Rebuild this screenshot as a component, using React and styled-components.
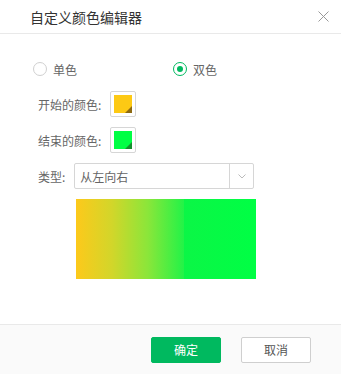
import React, { useState } from "react";
import styled, { createGlobalStyle } from "styled-components";

const GlobalStyle = createGlobalStyle`
  html, body {
    margin: 0;
    padding: 0;
    background: #ffffff;
  }
  body {
    font-family: "Noto Sans CJK SC", "Noto Sans", sans-serif;
  }
`;

const Dialog = styled.div`
  display: flex;
  flex-direction: column;
  width: 341px;
  height: 374px;
  background: #fff;
`;

const Header = styled.div`
  display: flex;
  align-items: center;
  height: 33px;
  padding: 0 8px 0 30px;
  border-bottom: 1px solid #e9e9e9;
`;

const Title = styled.div`
  flex: 1;
  font-size: 14px;
  color: #333;
`;

const CloseBtn = styled.button`
  display: grid;
  place-content: center;
  width: 20px;
  height: 20px;
  padding: 0;
  border: none;
  background: transparent;
  cursor: pointer;
`;

const Body = styled.div`
  flex: 1;
  display: flex;
  flex-direction: column;
  gap: 10px;
  padding: 22px 0 0 38px;
`;

const Row = styled.div`
  display: flex;
  align-items: center;
  gap: 9px;
  height: 26px;
`;

const RadioRow = styled.div`
  display: flex;
  align-items: center;
  height: 26px;
  margin-left: -5px;
  margin-bottom: -1px;
`;

const RadioItem = styled.label`
  display: flex;
  align-items: center;
  gap: 6px;
  width: 140px;
  font-size: 12px;
  color: #666;
  cursor: pointer;
`;

const RadioCircle = styled.span`
  display: grid;
  place-content: center;
  box-sizing: border-box;
  width: 14px;
  height: 14px;
  border-radius: 50%;
  border: 1px solid ${(p) => (p.$checked ? "#00b95f" : "#d0d0d0")};
  &::after {
    content: "";
    display: ${(p) => (p.$checked ? "block" : "none")};
    width: 6px;
    height: 6px;
    border-radius: 50%;
    background: #00b95f;
  }
`;

const Label = styled.span`
  font-size: 12px;
  color: #666;
`;

const Swatch = styled.div`
  position: relative;
  box-sizing: border-box;
  width: 26px;
  height: 26px;
  padding: 3px;
  border: 1px solid #d6d6d6;
  border-radius: 2px;
`;

const SwatchFill = styled.div`
  position: relative;
  width: 100%;
  height: 100%;
  background: ${(p) => p.$color};
  &::after {
    content: "";
    position: absolute;
    right: 0;
    bottom: 0;
    border-style: solid;
    border-width: 0 0 7px 7px;
    border-color: transparent transparent ${(p) => p.$shade} transparent;
  }
`;

const Select = styled.div`
  display: flex;
  box-sizing: border-box;
  width: 180px;
  height: 26px;
  border: 1px solid #d6d6d6;
  border-radius: 2px;
`;

const SelectValue = styled.div`
  flex: 1;
  display: flex;
  align-items: center;
  padding-left: 5px;
  font-size: 12px;
  color: #666;
`;

const SelectArrow = styled.div`
  display: grid;
  place-content: center;
  width: 23px;
  border-left: 1px solid #d6d6d6;
`;

const Preview = styled.div`
  width: 180px;
  height: 80px;
  margin-left: 38px;
  background: linear-gradient(
    to right,
    #fdc91b 0%,
    #d2d62a 20%,
    #8ae63a 40%,
    #22f347 60%,
    #0bf646 60%,
    #00ff44 100%
  );
`;

const Footer = styled.div`
  display: flex;
  align-items: center;
  justify-content: flex-end;
  gap: 20px;
  height: 49px;
  padding-right: 30px;
  background: #fafafa;
  border-top: 1px solid #e9e9e9;
`;

const Button = styled.button`
  box-sizing: border-box;
  width: 70px;
  height: 26px;
  border-radius: 2px;
  font-family: inherit;
  font-size: 12px;
  cursor: pointer;
  border: 1px solid ${(p) => (p.$primary ? "#00b95f" : "#cfcfcf")};
  background: ${(p) => (p.$primary ? "#00b95f" : "#fff")};
  color: ${(p) => (p.$primary ? "#fff" : "#555")};
`;

export default function App() {
  const [mode, setMode] = useState("double");

  return (
    <Dialog>
      <GlobalStyle />
      <Header>
        <Title>自定义颜色编辑器</Title>
        <CloseBtn>
          <svg width="11" height="11" viewBox="0 0 11 11">
            <path d="M0.5 0.5 L10.5 10.5 M10.5 0.5 L0.5 10.5" stroke="#999" strokeWidth="1" />
          </svg>
        </CloseBtn>
      </Header>
      <Body>
        <RadioRow>
          <RadioItem onClick={() => setMode("single")}>
            <RadioCircle $checked={mode === "single"} />
            单色
          </RadioItem>
          <RadioItem onClick={() => setMode("double")}>
            <RadioCircle $checked={mode === "double"} />
            双色
          </RadioItem>
        </RadioRow>
        <Row>
          <Label>开始的颜色:</Label>
          <Swatch>
            <SwatchFill $color="#fdc914" $shade="#8d6a12" />
          </Swatch>
        </Row>
        <Row>
          <Label>结束的颜色:</Label>
          <Swatch>
            <SwatchFill $color="#00ff44" $shade="#15902e" />
          </Swatch>
        </Row>
        <Row>
          <Label>类型:</Label>
          <Select>
            <SelectValue>从左向右</SelectValue>
            <SelectArrow>
              <svg width="8" height="5" viewBox="0 0 8 5">
                <path d="M0.5 0.5 L4 4 L7.5 0.5" fill="none" stroke="#bbb" strokeWidth="1" />
              </svg>
            </SelectArrow>
          </Select>
        </Row>
        <Preview />
      </Body>
      <Footer>
        <Button $primary>确定</Button>
        <Button>取消</Button>
      </Footer>
    </Dialog>
  );
}
